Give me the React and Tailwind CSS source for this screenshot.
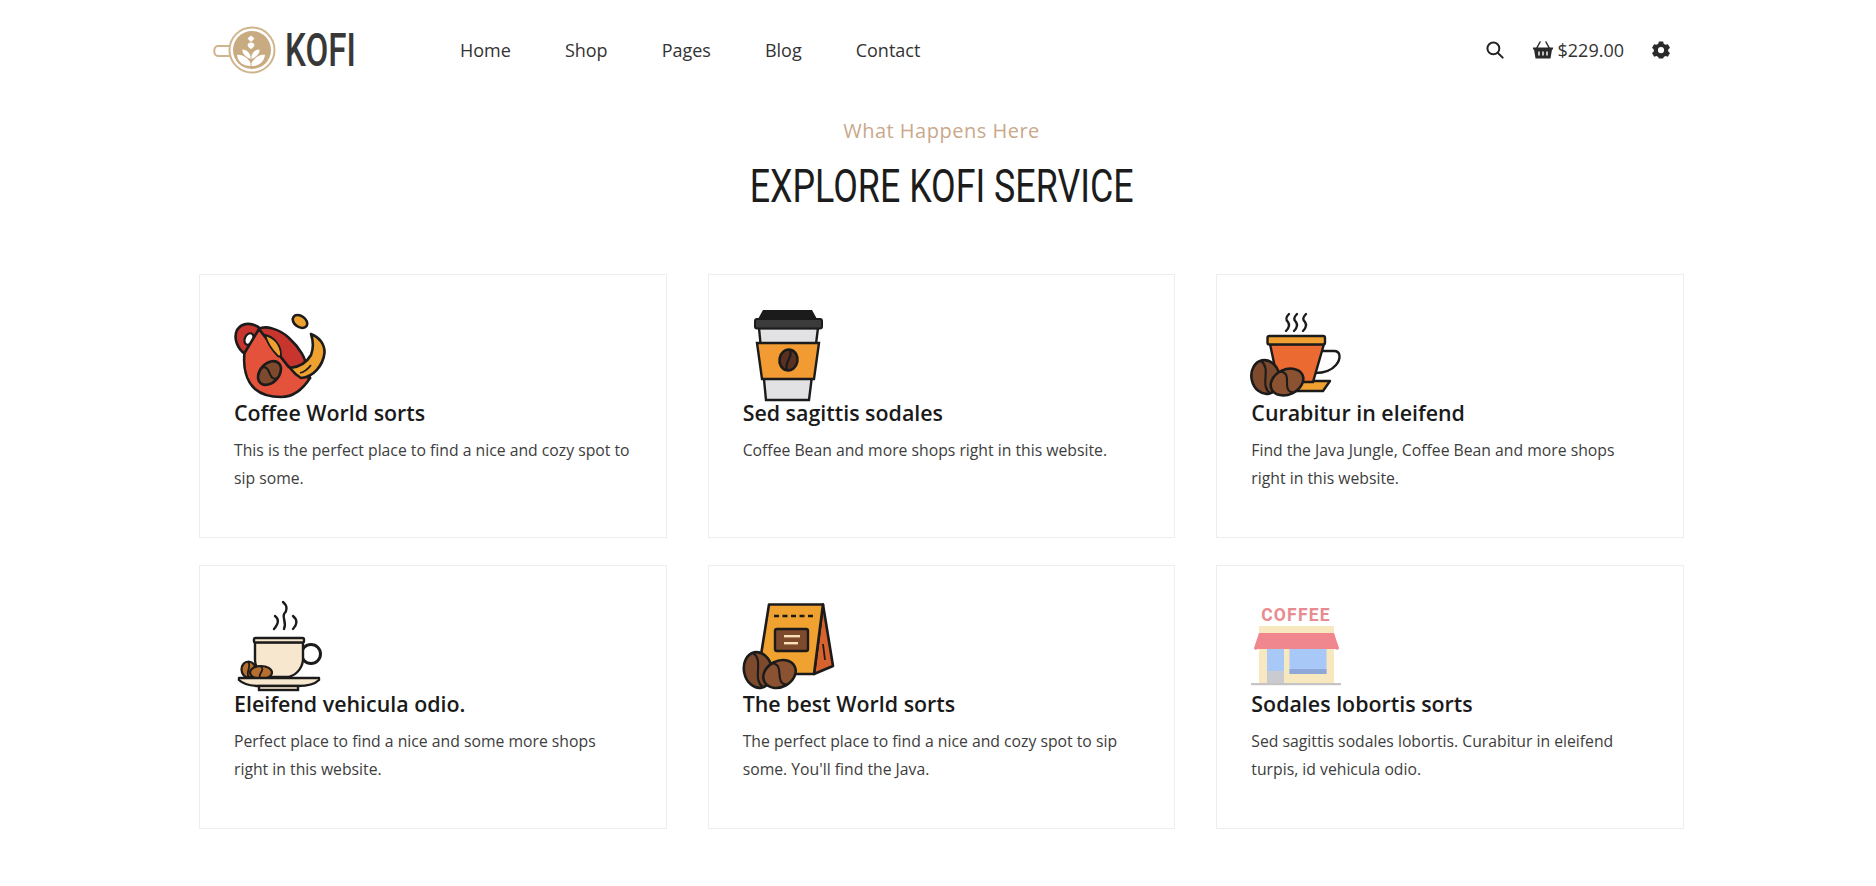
import React from "react";

const K = "#1b1b1b";

function Bean({ cx, cy, rx, ry, rot = 0, fill = "#7d4a2e", sw = 2.6 }) {
  return (
    <g transform={`translate(${cx} ${cy}) rotate(${rot})`}>
      <ellipse rx={rx} ry={ry} fill={fill} stroke={K} strokeWidth={sw} />
      <path d={`M${-rx * 0.1} ${-ry} C${rx * 0.6} ${-ry * 0.4} ${-rx * 0.6} ${ry * 0.4} ${rx * 0.1} ${ry}`} fill="none" stroke={K} strokeWidth={sw * 0.8} />
    </g>
  );
}

const Icon1 = () => (
  <svg viewBox="0 0 90 92" className="w-[90px] h-[92px] overflow-visible">
    <path d="M27 20C19 13 8 13 3 21C-1 30 4 40 11 45L22 32Z" fill="#c8352f" stroke={K} strokeWidth="2.6" strokeLinejoin="round" />
    <ellipse cx="15" cy="30" rx="4.2" ry="6" transform="rotate(25 15 30)" fill="#fff" stroke={K} strokeWidth="2.2" />
    <path d="M25 20L10.5 44C9 58 12 72 21 80C29 87 39 88 47 88C59 88 69 80 76 69L54 57Z" fill="#e4523b" stroke={K} strokeWidth="2.6" strokeLinejoin="round" />
    <path d="M25 20C31 16 46 20 55 29C66 39 72 50 72 57L76 69C67 66 60 63 54 57Z" fill="#c8352f" stroke={K} strokeWidth="2.6" strokeLinejoin="round" />
    <path d="M31 26C40 28 47 36 47 46C46 48 44 48 43 46C38 41 33 33 31 26Z" fill="#efa130" stroke={K} strokeWidth="1.8" />
    <path d="M77 25C85 28 91 35 90.5 44C89 56 80 68 67 69C62 66 59 63 56 59C66 58 73 53 77 46C80 38 79 31 77 25Z" fill="#efa130" stroke={K} strokeWidth="2.6" strokeLinejoin="round" />
    <path d="M66 64C70 63 74 60 77 56" fill="none" stroke={K} strokeWidth="1.8" />
    <ellipse cx="66" cy="12.5" rx="8" ry="5.5" transform="rotate(35 66 12.5)" fill="#efa130" stroke={K} strokeWidth="2.6" />
    <Bean cx={35.5} cy={64} rx={13.5} ry={9.5} rot={-48} />
  </svg>
);

const Icon2 = () => (
  <svg viewBox="0 0 90 92" className="w-[90px] h-[92px] overflow-visible">
    <path d="M16 19L23 91H66L75 19Z" fill="#e2e2e4" stroke={K} strokeWidth="2.4" />
    <path d="M14 34H76L71 70H19Z" fill="#f19b32" stroke={K} strokeWidth="2.4" />
    <path d="M20 1H69L74 10H15Z" fill={K} />
    <rect x="12" y="10" width="67" height="9.5" rx="2" fill="#3b3b3b" stroke={K} strokeWidth="2" />
    <Bean cx={45.5} cy={51} rx={9} ry={10.5} rot={10} fill="#5a3020" />
  </svg>
);

const Icon3 = () => (
  <svg viewBox="0 0 90 92" className="w-[90px] h-[92px] overflow-visible">
    <g fill="none" stroke={K} strokeWidth="2.4" strokeLinecap="round">
      <path d="M38 5C34 9 35 11 37 13C39 16 38 19 35 22" />
      <path d="M46 5C42 9 43 11 45 13C47 16 46 19 43 22" />
      <path d="M55 5C51 9 52 11 54 13C56 16 55 19 52 22" />
      <path d="M72 42H83C90 42 90 50 85 56C80 62 74 64 64 64" strokeWidth="2.4" />
    </g>
    <path d="M49 72H79L72 82H45Z" fill="#f0a030" stroke={K} strokeWidth="2.4" strokeLinejoin="round" />
    <path d="M19 35H73L62 73H27Z" fill="#ea6a31" stroke={K} strokeWidth="2.4" />
    <rect x="16.5" y="27" width="57.5" height="8.5" rx="2" fill="#f0a030" stroke={K} strokeWidth="2.4" />
    <Bean cx={14.5} cy={68} rx={14} ry={17} rot={-12} />
    <Bean cx={36} cy={73} rx={17} ry={12.5} rot={-25} fill="#8a5230" />
  </svg>
);

const Icon4 = () => (
  <svg viewBox="0 0 90 92" className="w-[90px] h-[92px] overflow-visible">
    <g fill="none" stroke={K} strokeWidth="2.4" strokeLinecap="round">
      <path d="M41 16C45 19 45 23 40 29" />
      <path d="M49 2C54 6 53 11 50 14C48 18 53 22 50 29" />
      <path d="M59 16C64 20 63 25 59 29" />
    </g>
    <circle cx="77" cy="54" r="9.5" fill="#fff" stroke={K} strokeWidth="3" />
    <path d="M21 42H69V60C68 70 60 77 52 77H38C28 77 21 68 21 60Z" fill="#f8e7cf" stroke={K} strokeWidth="2.4" />
    <rect x="20" y="38" width="50" height="4.5" rx="1.5" fill="#f8e7cf" stroke={K} strokeWidth="2.4" />
    <Bean cx={14.5} cy={69.5} rx={7} ry={8} fill="#b86e2c" sw={2.2} />
    <Bean cx={27} cy={72.5} rx={11} ry={6.5} fill="#b86e2c" sw={2.2} />
    <path d="M5 78H85V80C80 85 70 86 64 86H26C20 86 10 85 5 80Z" fill="#f8e7cf" stroke={K} strokeWidth="2.4" strokeLinejoin="round" />
    <rect x="25" y="86" width="39" height="4" fill="#f8e7cf" stroke={K} strokeWidth="2.4" />
  </svg>
);

const Icon5 = () => (
  <svg viewBox="0 0 90 92" className="w-[90px] h-[92px] overflow-visible">
    <path d="M80 4.5L90 66L71 74Z" fill="#d8622e" stroke={K} strokeWidth="2.6" strokeLinejoin="round" />
    <path d="M26 4.5H80L71 74H15Z" fill="#f0a231" stroke={K} strokeWidth="2.6" strokeLinejoin="round" />
    <line x1="31" y1="16" x2="72" y2="16" stroke={K} strokeWidth="2.6" strokeDasharray="5 3.5" />
    <rect x="32" y="29" width="33" height="22" rx="2" fill="#7d4a2e" stroke={K} strokeWidth="2.4" />
    <rect x="41" y="35" width="16" height="2.4" fill="#f8e0b8" />
    <rect x="41" y="42" width="14" height="2.4" fill="#f8e0b8" />
    <path d="M80 44L82 60" stroke={K} strokeWidth="1.8" />
    <Bean cx={15} cy={70} rx={14} ry={18} rot={-12} />
    <Bean cx={36.5} cy={74} rx={17} ry={13} rot={-28} fill="#8a5230" />
  </svg>
);

const Icon6 = () => (
  <svg viewBox="0 0 90 92" className="w-[90px] h-[92px] overflow-visible">
    <text x="45" y="20.5" textAnchor="middle" fill="#e88b90" fontSize="17.5" fontWeight="700" letterSpacing="1.2" style={{ fontFamily: 'Roboto, sans-serif' }}>COFFEE</text>
    <rect x="8" y="26" width="75" height="57" fill="#f8e8c0" />
    <rect x="16" y="48" width="17" height="35" fill="#a8c8f8" />
    <rect x="16" y="71" width="17" height="12" fill="#c9cbd0" />
    <rect x="38.5" y="48" width="37" height="26" fill="#a8c8f8" />
    <rect x="38.5" y="69" width="37" height="5" fill="#8fa8d8" />
    <path d="M8 33H83L88 48C88 50 86 50 84 49H7C5 50 3 50 3 48Z" fill="#f0878f" />
    <rect x="0" y="83" width="90" height="2.2" fill="#c4c4c4" />
  </svg>
);

const cards = [
  { Icon: Icon1, title: "Coffee World sorts", text: "This is the perfect place to find a nice and cozy spot to sip some." },
  { Icon: Icon2, title: "Sed sagittis sodales", text: "Coffee Bean and more shops right in this website." },
  { Icon: Icon3, title: "Curabitur in eleifend", text: "Find the Java Jungle, Coffee Bean and more shops right in this website." },
  { Icon: Icon4, title: "Eleifend vehicula odio.", text: "Perfect place to find a nice and some more shops right in this website." },
  { Icon: Icon5, title: "The best World sorts", text: "The perfect place to find a nice and cozy spot to sip some. You'll find the Java." },
  { Icon: Icon6, title: "Sodales lobortis sorts", text: "Sed sagittis sodales lobortis. Curabitur in eleifend turpis, id vehicula odio." },
];

const Logo = () => (
  <svg viewBox="0 0 68 48" className="w-[68px] h-[48px] overflow-visible">
    <path d="M17 20H5C0 20 0 30 5 30H17" fill="#fff" stroke="#d0b48e" strokeWidth="2" />
    <circle cx="39" cy="24" r="22.5" fill="#fff" stroke="#d0b48e" strokeWidth="2" />
    <circle cx="39" cy="24" r="19" fill="#c9ab82" />
    <path d="M38 9.5L41.5 12.5L38 16L34.5 12.5Z" fill="#fff" />
    <path d="M38 16.5C42 17 43 20 38 23C33 20 34 17 38 16.5Z" fill="#fff" />
    <path d="M37.5 40C30 40 25 36 24 29C29 28 35 32 37.5 37ZM38.5 40C46 40 51 36 52 29C47 28 41 32 38.5 37Z" fill="#fff" />
    <path d="M37.5 33C33 31 29 28 29.5 23.5C33.5 23.5 36.5 26.5 37.5 30ZM38.5 33C43 31 47 28 46.5 23.5C42.5 23.5 39.5 26.5 38.5 30Z" fill="#fff" />
  </svg>
);

const Search = () => (
  <svg viewBox="0 0 20 20" className="w-[18px] h-[18px]" fill="none" stroke="#222" strokeWidth="2.2" strokeLinecap="round">
    <circle cx="8.2" cy="8.2" r="6.6" />
    <path d="M13 13L18.5 18.5" />
  </svg>
);

const Basket = () => (
  <svg viewBox="0 0 20 18" className="w-[20px] h-[18px]">
    <path d="M3.5 7.5L7 1M16.5 7.5L13 1" stroke="#2a2a2a" strokeWidth="1.5" strokeLinecap="round" fill="none" />
    <path d="M0 6.5H20V8.5H19L17.5 17.5H2.5L1 8.5H0Z" fill="#2a2a2a" />
    <path d="M6 10.5V14.5M10 10.5V14.5M14 10.5V14.5" stroke="#fff" strokeWidth="1.4" />
  </svg>
);

const Gear = () => (
  <svg viewBox="0 0 20 20" className="w-[18px] h-[18px]">
    <path fillRule="evenodd" fill="#2a2a2a" d="M7.6 0.5H12.4L13 3.1L15 4.3L17.6 3.5L20 7.6L18 9.4V11.6L20 13.4L17.6 17.5L15 16.7L13 17.9L12.4 19.5H7.6L7 17.9L5 16.7L2.4 17.5L0 13.4L2 11.6V9.4L0 7.6L2.4 3.5L5 4.3L7 3.1ZM10 6.8A3.4 3.4 0 1 0 10 13.6A3.4 3.4 0 1 0 10 6.8Z" />
  </svg>
);

export default function App() {
  return (
    <div className="min-h-[886px] bg-white font-['Open_Sans',sans-serif] text-[#333]">
      <header className="flex h-[100px] items-center pl-[213px] pr-[206px]">
        <Logo />
        <span className="ml-[4px] w-[68px] origin-left scale-x-[0.72] font-['Roboto',sans-serif] text-[46px] leading-none font-medium text-[#383838]">KOFI</span>
        <nav className="ml-[107px] flex gap-[54px] text-[18px]">
          <a>Home</a>
          <a>Shop</a>
          <a>Pages</a>
          <a>Blog</a>
          <a>Contact</a>
        </nav>
        <div className="ml-auto flex items-center">
          <Search />
          <span className="ml-[29px]"><Basket /></span>
          <span className="ml-[5px] text-[18px]">$229.00</span>
          <span className="ml-[28px]"><Gear /></span>
        </div>
      </header>

      <section className="ml-[199px] w-[1485px]">
        <div className="flex flex-col items-center">
          <p className="mt-[17px] text-[20px] leading-[28px] tracking-[0.5px] text-[#c9a98a]">What Happens Here</p>
          <h2 className="mt-[11px] origin-center scale-x-[0.778] font-['Roboto',sans-serif] text-[46px] leading-[60px] font-normal whitespace-nowrap text-[#1c1c1c]">EXPLORE KOFI SERVICE</h2>
        </div>
        <div className="mt-[58px] grid grid-cols-3 gap-x-[41px] gap-y-[27px]">
          {cards.map(({ Icon, title, text }) => (
            <div key={title} className="h-[264px] border border-[#eeeeee] px-[34px] pt-[34px]">
              <div className="h-[90px]"><Icon /></div>
              <h3 className="text-[21.4px] leading-[28px] font-semibold text-[#1a1a1a]">{title}</h3>
              <p className="mt-[10px] w-[398px] text-[15.75px] leading-[27.5px] text-[#3d3d3d]">{text}</p>
            </div>
          ))}
        </div>
      </section>
    </div>
  );
}
